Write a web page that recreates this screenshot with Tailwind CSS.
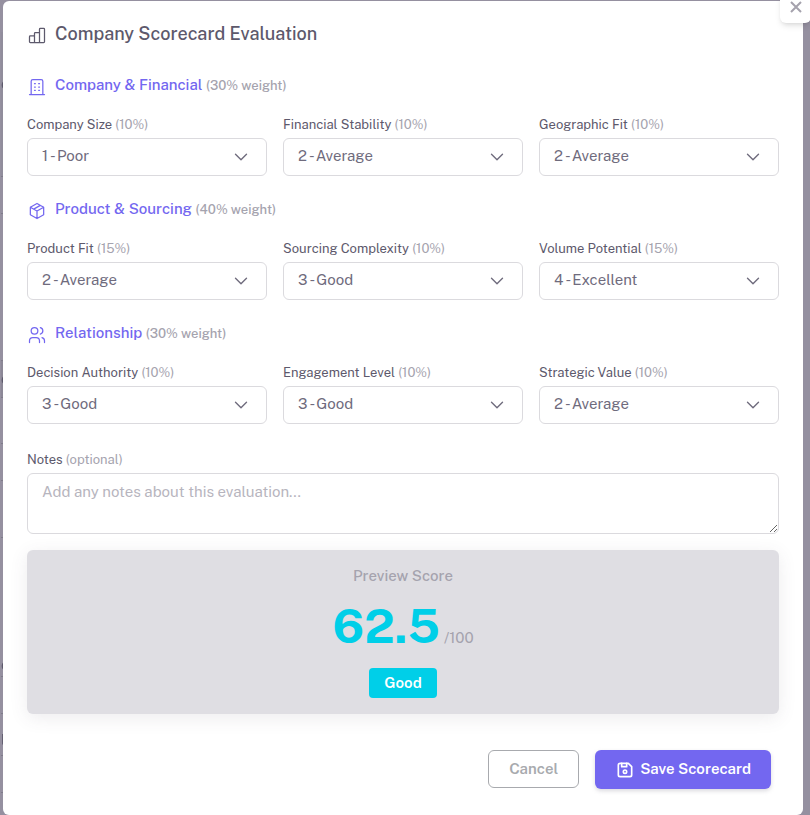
<!DOCTYPE html>
<html lang="en">
<head>
  <meta charset="UTF-8" />
  <meta name="viewport" content="width=device-width, initial-scale=1.0"/>
  <title>Company Scorecard Evaluation</title>
  <script src="https://cdn.jsdelivr.net/npm/@tailwindcss/browser@4"></script>
</head>
<body class="min-h-screen bg-[#9590a0] font-['Public_Sans',Inter,sans-serif] text-[15px] text-[#6f6b7d]">

  <!-- Dimmed page rows behind the dialog -->
  <div class="fixed inset-y-0 left-0 -z-10 flex w-4 flex-col overflow-hidden pl-px text-[#5d596c]" aria-hidden="true">
    <div class="h-8"></div>
    <div class="flex h-[145px] items-center border-b border-[#7f7b8a] bg-[#918d9c] pb-10">o</div>
    <div class="h-[37px] border-b border-[#7f7b8a]"></div>
    <div class="h-[147px] border-b border-[#7f7b8a]"></div>
    <div class="flex h-[37px] items-center border-b border-[#7f7b8a] bg-[#8c8897]">o</div>
    <div class="h-[46px] border-b border-[#7f7b8a]"></div>
    <div class="h-[37px] border-b border-[#7f7b8a]"></div>
    <div class="h-[57px] border-b border-[#7f7b8a]"></div>
    <div class="flex h-[139px] items-end border-b border-[#7f7b8a]">o</div>
    <div class="h-[37px] border-b border-[#7f7b8a]"></div>
    <div class="flex h-[42px] items-end border-b border-[#7f7b8a] pb-1">l</div>
    <div class="h-[37px] border-b border-[#7f7b8a]"></div>
  </div>

  <div class="pt-px pr-[7px] pl-[3px]">
    <form class="relative rounded-md bg-white px-6 pt-[21px] pb-[26px]" role="dialog" aria-labelledby="title">
      <button type="button" aria-label="Close" class="absolute -top-2 -right-2 flex h-[30px] w-[31px] items-center justify-center rounded-md bg-white pb-0.5 text-[#a5a2ad] shadow-md">
        <svg class="h-5 w-5" viewBox="0 0 24 24" fill="none" stroke="currentColor" stroke-width="2.4"><path d="M18 6L6 18M6 6l12 12"/></svg>
      </button>

      <h1 id="title" class="mb-[27px] flex h-6 items-center gap-2 text-lg leading-6 font-medium text-[#5d596c]">
        <svg class="mt-0.5 h-5 w-5" viewBox="0 0 24 24" fill="none" stroke="currentColor" stroke-width="1.5" stroke-linecap="round" stroke-linejoin="round"><path d="M3 14a1 1 0 0 1 1-1h4a1 1 0 0 1 1 1v6a1 1 0 0 1-1 1H4a1 1 0 0 1-1-1zM9 10a1 1 0 0 1 1-1h4a1 1 0 0 1 1 1v10a1 1 0 0 1-1 1h-4a1 1 0 0 1-1-1zM15 5a1 1 0 0 1 1-1h4a1 1 0 0 1 1 1v15a1 1 0 0 1-1 1h-4a1 1 0 0 1-1-1zM4 21h16"/></svg>
        Company Scorecard Evaluation
      </h1>

      <div id="sections"></div>

      <label for="notes" class="mt-[26px] mb-[3px] block text-[13px] leading-5 text-[#5d596c]">Notes <span class="text-[#a5a3ae]">(optional)</span></label>
      <textarea id="notes" placeholder="Add any notes about this evaluation..." class="block h-[61px] w-full resize-y rounded-md border border-[#dbdade] px-3.5 py-[7px] leading-[22px] placeholder:text-[#b7b5be]"></textarea>

      <section class="mt-4 flex flex-col items-center rounded-md bg-[#dfdee3] py-4 shadow-[0_4px_18px_rgba(75,70,92,0.1)]">
        <h2 class="font-medium leading-5 text-[#a5a3ae]">Preview Score</h2>
        <p class="mt-[15px] mb-[17px] flex h-[50px] items-baseline gap-1 text-[#a5a3ae]">
          <span class="text-5xl leading-[50px] font-bold text-[#00cfe8]">62.5</span>/100
        </p>
        <span class="rounded bg-[#00cfe8] px-[15px] leading-[30px] font-semibold text-white">Good</span>
      </section>

      <div class="mt-9 flex items-start justify-end gap-4 pr-2">
        <button type="button" class="h-[38px] rounded-md border border-[#a8aaae] px-5 font-semibold text-[#a8aaae]">Cancel</button>
        <button type="submit" class="flex h-[39px] items-center gap-[5px] rounded-md bg-[#7367f0] px-5 font-semibold text-white shadow-[0_2px_4px_rgba(165,163,174,0.4)]">
          <svg class="h-5 w-5" viewBox="0 0 24 24" fill="none" stroke="currentColor" stroke-width="2" stroke-linecap="round" stroke-linejoin="round"><path d="M6 4h10l4 4v10a2 2 0 0 1-2 2H6a2 2 0 0 1-2-2V6a2 2 0 0 1 2-2"/><circle cx="12" cy="14" r="2"/><path d="M14 4v4H8V4"/></svg>
          Save Scorecard
        </button>
      </div>
    </form>
  </div>

  <script>
    const ratings = ["1 - Poor", "2 - Average", "3 - Good", "4 - Excellent"];

    const sections = [
      {
        title: "Company & Financial", weight: 30,
        icon: '<path d="M3 21h18M5 21V5a2 2 0 0 1 2-2h10a2 2 0 0 1 2 2v16M9 8h1M9 12h1M9 16h1M14 8h1M14 12h1M14 16h1"/>',
        fields: [["Company Size", 10, 1], ["Financial Stability", 10, 2], ["Geographic Fit", 10, 2]]
      },
      {
        title: "Product & Sourcing", weight: 40,
        icon: '<path d="M12 3l8 4.500v9L12 21l-8-4.500v-9zM12 12l8-4.500M12 12v9M12 12L4 7.500M16 5.250l-8 4.500"/>',
        fields: [["Product Fit", 15, 2], ["Sourcing Complexity", 10, 3], ["Volume Potential", 15, 4]]
      },
      {
        title: "Relationship", weight: 30,
        icon: '<circle cx="9" cy="7" r="4"/><path d="M3 21v-2a4 4 0 0 1 4-4h4a4 4 0 0 1 4 4v2M16 3.130a4 4 0 0 1 0 7.750M21 21v-2a4 4 0 0 0-3-3.850"/>',
        fields: [["Decision Authority", 10, 3], ["Engagement Level", 10, 3], ["Strategic Value", 10, 2]]
      }
    ];

    // --- Render sections ---
    document.getElementById("sections").innerHTML = sections.map((s, i) => `
      <section class="mb-[21px]">
        <h2 class="mb-[18px] flex h-6 items-center gap-2 leading-6 font-medium text-[#7367f0]">
          <svg class="mt-1 h-5 w-5" viewBox="0 0 24 24" fill="none" stroke="currentColor" stroke-width="1.5" stroke-linecap="round" stroke-linejoin="round">${s.icon}</svg>
          <span>${s.title.replace("&", "&amp;")} <small class="text-[13px] text-[#a5a3ae]">(${s.weight}% weight)</small></span>
        </h2>
        <div class="grid grid-cols-3 gap-4">
          ${s.fields.map(([label, pct, value], j) => `
            <div>
              <label for="f${i}${j}" class="mb-[3px] block text-[13px] leading-5 text-[#5d596c]">${label} <span class="text-[#a5a3ae]">(${pct}%)</span></label>
              <div class="relative">
                <select id="f${i}${j}" class="block h-[38px] w-full appearance-none rounded-md border border-[#dbdade] bg-white px-3.5 pb-px">
                  ${ratings.map((r, k) => `<option ${k + 1 === value ? "selected" : ""}>${r}</option>`).join("")}
                </select>
                <svg class="pointer-events-none absolute top-2 right-[15px] h-[22px] w-[22px]" viewBox="0 0 24 24" fill="none" stroke="currentColor" stroke-width="1.5" stroke-linecap="round" stroke-linejoin="round"><path d="M6 9l6 6 6-6"/></svg>
              </div>
            </div>`).join("")}
        </div>
      </section>`).join("");
  </script>
</body>
</html>
